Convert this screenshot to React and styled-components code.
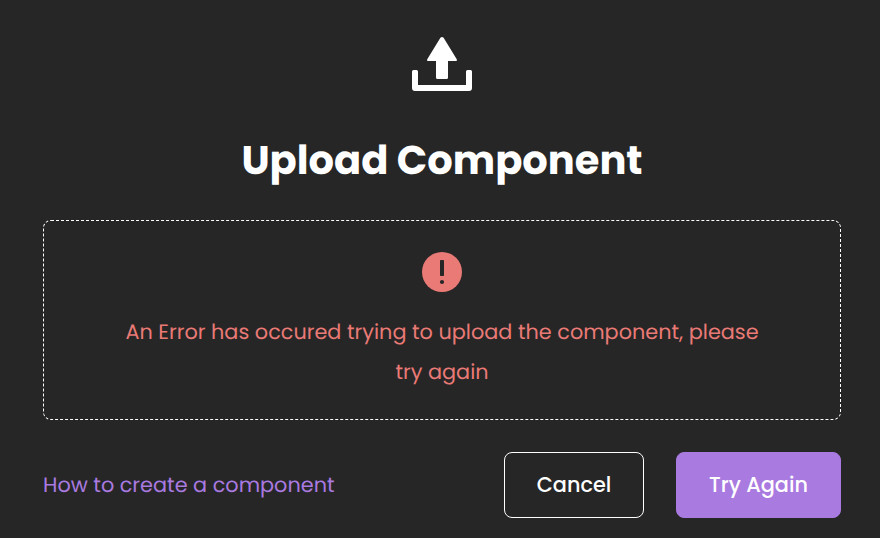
import React from "react";
import styled, { createGlobalStyle } from "styled-components";

const GlobalStyle = createGlobalStyle`
  * { box-sizing: border-box; }
  body { margin: 0; background: #262626; }
  button { font-family: inherit; cursor: pointer; }
`;

const Dialog = styled.main`
  display: flex;
  flex-direction: column;
  align-items: center;
  width: 880px;
  height: 538px;
  padding: 37px 39px 20px 43px;
  background: #262626;
  color: #fff;
  font-family: Poppins, Inter, sans-serif;
  text-rendering: geometricPrecision;
  -webkit-font-smoothing: antialiased;
`;

const UploadIcon = styled.svg`
  display: block;
  width: 60px;
  height: 54px;
  flex: none;
`;

const Title = styled.h1`
  margin: 39px 0 30px;
  font-size: 40px;
  line-height: 60px;
  font-weight: 700;
  white-space: nowrap;
`;

const DropZone = styled.section`
  display: flex;
  flex-direction: column;
  align-items: center;
  width: 100%;
  height: 200px;
  padding-top: 31px;
  border: 1px dashed #fff;
  border-radius: 8px;
`;

const ErrorIcon = styled.svg`
  display: block;
  width: 40px;
  height: 40px;
  flex: none;
`;

const ErrorText = styled.p`
  width: 680px;
  margin: 21px 0 0;
  color: #ea7a76;
  font-size: 20.8px;
  line-height: 40px;
  text-align: center;
`;

const Footer = styled.footer`
  display: flex;
  align-items: center;
  width: 100%;
  margin-top: 32px;
  gap: 32px;
`;

const HelpLink = styled.a`
  margin-right: auto;
  padding-top: 2px;
  color: #a97ae0;
  font-size: 20.8px;
  line-height: 32px;
  text-decoration: none;
  white-space: nowrap;
`;

const Button = styled.button`
  width: ${({ $primary }) => ($primary ? "165px" : "140px")};
  height: 66px;
  padding: 0;
  border: 1px solid ${({ $primary }) => ($primary ? "#a97ae0" : "#fff")};
  border-radius: 8px;
  background: ${({ $primary }) => ($primary ? "#a97ae0" : "transparent")};
  color: #fff;
  font-size: 20.8px;
  line-height: 32px;
  font-weight: 500;
  white-space: nowrap;
`;

export default function App() {
  return (
    <>
      <GlobalStyle />
      <Dialog>
        <UploadIcon viewBox="0 0 60 54" fill="#fff" aria-hidden="true">
          <path d="M28.4 .8Q30-.8 31.6 .8L44.6 22Q45.6 24 44 24H36V40.5Q36 42 34.5 42H25.5Q24 42 24 40.5V24H16Q14.4 24 15.4 22Z" />
          <path d="M1.5 33H4.5Q6 33 6 34.5V48H54V34.5Q54 33 55.5 33H58.5Q60 33 60 34.5V51Q60 54 57 54H3Q0 54 0 51V34.5Q0 33 1.5 33Z" />
        </UploadIcon>
        <Title>Upload Component</Title>
        <DropZone>
          <ErrorIcon viewBox="0 0 40 40" aria-hidden="true">
            <circle cx="20" cy="20" r="20" fill="#ea7a76" />
            <rect x="18" y="8" width="4" height="16" rx=".7" fill="#262626" />
            <circle cx="20" cy="30" r="2.1" fill="#262626" />
          </ErrorIcon>
          <ErrorText>
            An Error has occured trying to upload the component, please
            <br />
            try again
          </ErrorText>
        </DropZone>
        <Footer>
          <HelpLink href="#">How to create a component</HelpLink>
          <Button type="button">Cancel</Button>
          <Button type="button" $primary>Try Again</Button>
        </Footer>
      </Dialog>
    </>
  );
}
